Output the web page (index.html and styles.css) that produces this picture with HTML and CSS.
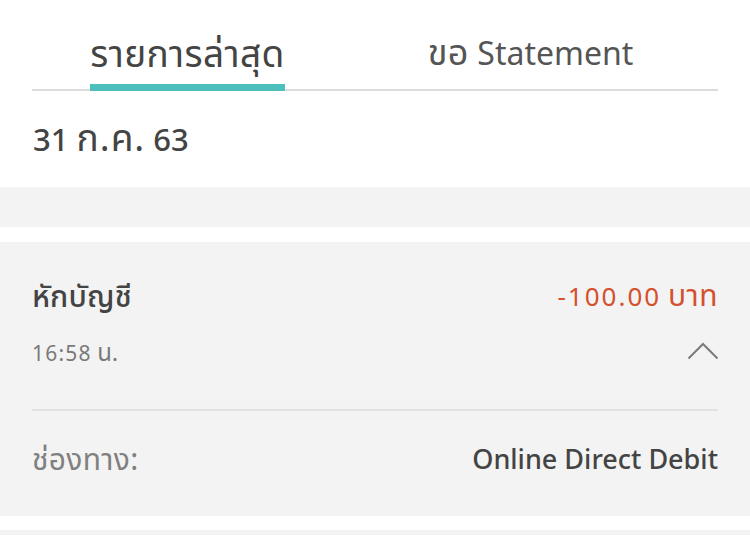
FILE: index.html
```html
<!DOCTYPE html>
<html lang="th">
<head>
<meta charset="utf-8">
<link rel="stylesheet" href="styles.css">
</head>
<body>
<div class="page">
  <div class="tabs">
    <div class="tab-grid">
      <div class="tab active"><span class="tab-label"><span class="th">รายการล่าสุด</span></span></div>
      <div class="tab"><span class="tab-label"><span class="th">ขอ</span> Statement</span></div>
    </div>
  </div>
  <div class="date">31 <span class="th">ก.ค.</span> 63</div>
  <div class="band"></div>
  <div class="card">
    <div class="row top">
      <span class="title th">หักบัญชี</span>
      <span class="amount"><span class="num">-100.00</span> <span class="th">บาท</span></span>
    </div>
    <div class="row sub">
      <span class="time"><span class="num">16:58</span> <span class="th">น.</span></span>
      <svg class="chev" width="32" height="18" viewBox="0 0 32 18"><path d="M1.5 16.5 L16 2 L30.5 16.5" fill="none" stroke="#7a7a7a" stroke-width="2"/></svg>
    </div>
    <div class="divider"></div>
    <div class="row detail">
      <span class="label th">ช่องทาง:</span>
      <span class="value">Online Direct Debit</span>
    </div>
  </div>
  <div class="band2"></div>
</div>
</body>
</html>
```
FILE: styles.css
```css
html, body { margin: 0; padding: 0; background: #fff; }
body { font-family: "Noto Sans", "Noto Sans Thai", "Open Sans", sans-serif; color: #444; }
.page { width: 750px; height: 535px; overflow: hidden; }
.tabs { margin: 0 32px; height: 89px; border-bottom: 2px solid #dcdcdc; }
.tab-grid { display: grid; grid-template-columns: 343px 343px; margin-left: -16px; height: 100%; }
.tab { display: flex; justify-content: center; align-items: flex-end; }
.tab-label { font-size: 32px; color: #555; line-height: 40px; padding-bottom: 16px; white-space: nowrap; }
.tab-label .th { font-size: 36px; letter-spacing: 0.5px; }
.tab.active .tab-label { color: #444; border-bottom: 7px solid #4dc0bd; padding-bottom: 9px; margin-bottom: -2px; }
.tab.active .tab-label .th { font-size: 37px; letter-spacing: 0.4px; }
.date { padding: 26px 33px 0; box-sizing: border-box; height: 96px; font-size: 31px; line-height: 40px; font-weight: 500; color: #444; }
.date .th { font-size: 37px; font-weight: 400; letter-spacing: 1px; }
.band { height: 40px; background: #f3f3f3; }
.band2 { height: 20px; margin-top: 14px; background: #f3f3f3; }
.card { margin-top: 15px; background: #f3f3f3; padding: 0 32px; height: 274px; box-sizing: border-box; padding-top: 35px; }
.row { display: flex; justify-content: space-between; align-items: center; line-height: 36px; }
.title { font-size: 30px; color: #444; font-weight: 500; letter-spacing: 0.2px; }
.amount { font-size: 26px; color: #d4502e; }
.amount .num { letter-spacing: 2px; }
.amount .th { font-size: 30px; letter-spacing: 0.5px; }
.sub { margin-top: 23px; line-height: 30px; }
.time { font-size: 21px; color: #7a7a7a; }
.time .num { letter-spacing: 1.2px; }
.time .th { font-size: 24px; }
.chev { display: block; margin-right: -1px; margin-top: -3px; }
.divider { height: 2px; background: #e2e2e2; margin-top: 41px; }
.detail { margin-top: 30px; }
.label { font-size: 30px; color: #808080; letter-spacing: 0.3px; }
.value { font-size: 27px; color: #444; font-weight: 500; }
```
